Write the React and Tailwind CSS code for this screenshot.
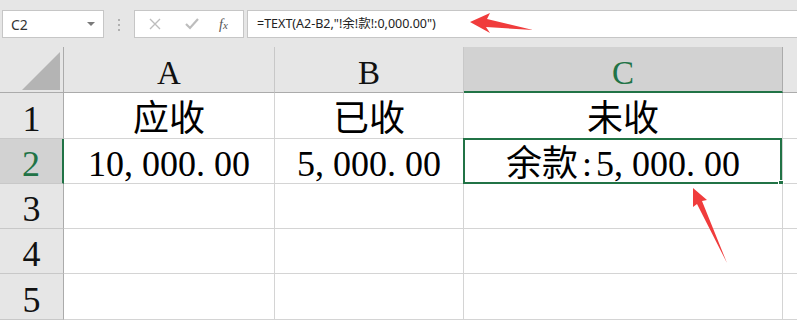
import React from "react";

const serif = "font-['Liberation_Serif','Noto_Sans_CJK_SC',serif]";

// SimSun-like half-width cells for punctuation
const Txt = ({ s }) => (
  <span>
    {s.split("").map((ch, i) =>
      ch === "," || ch === "." ? (
        <span key={i} className="inline-block w-[0.5em] text-left">
          {ch}
        </span>
      ) : ch === ":" ? (
        <span key={i} className="inline-block w-[0.5em] text-center">
          {ch}
        </span>
      ) : (
        <span key={i}>{ch}</span>
      )
    )}
  </span>
);

const Arrows = () => (
  <svg
    className="absolute left-0 top-0 pointer-events-none"
    width="797"
    height="320"
    viewBox="0 0 797 320"
  >
    {/* formula bar arrow */}
    <polygon
      points="470,22 490,13 487,19 533,30 486,27 490,33"
      fill="#f03c3c"
    />
    {/* cell arrow */}
    <polygon
      points="693,188 707,200 702,201 727,263 697,204 693,207"
      fill="#f03c3c"
    />
  </svg>
);

const Toolbar = () => (
  <div className="h-[47px] bg-[#e6e6e6] relative">
    {/* name box */}
    <div className="absolute left-[2px] top-[10px] w-[102px] h-[28px] bg-white border border-[#c6c6c6] flex items-center pl-[8px] pr-[6px]">
      <span className="text-[14px] text-[#333] font-['Noto_Sans',sans-serif] flex-1">C2</span>
      <span className="w-0 h-0 border-l-[4px] border-r-[4px] border-t-[4px] border-l-transparent border-r-transparent border-t-[#7a7a7a] mr-[2px]" />
    </div>
    {/* dots */}
    <div className="absolute left-[118px] top-[19px] flex flex-col gap-[3px]">
      <span className="w-[2px] h-[2px] bg-[#b0b0b0]" />
      <span className="w-[2px] h-[2px] bg-[#b0b0b0]" />
      <span className="w-[2px] h-[2px] bg-[#b0b0b0]" />
    </div>
    {/* fx box */}
    <div className="absolute left-[134px] top-[10px] w-[110px] h-[28px] bg-white border border-[#c6c6c6] flex items-center">
      <svg width="12" height="12" viewBox="0 0 12 12" className="ml-[14px]">
        <path d="M1 1L11 11M11 1L1 11" stroke="#bdbdbd" strokeWidth="1.4" />
      </svg>
      <svg width="14" height="12" viewBox="0 0 14 12" className="ml-[24px]">
        <path d="M1 6L5 10L13 1" stroke="#bdbdbd" strokeWidth="2.2" fill="none" />
      </svg>
      <span className="ml-[20px] italic text-[14px] text-[#555] font-['Liberation_Serif',serif]">
        f<span className="text-[11px]">x</span>
      </span>
    </div>
    {/* formula */}
    <div className="absolute left-[247px] top-[10px] -right-[2px] h-[28px] bg-white border border-[#c6c6c6] flex items-center pl-[9px]">
      <span className="text-[12.5px] text-[#222] font-['Noto_Sans','Noto_Sans_CJK_SC',sans-serif]">
        =TEXT(A2-B2,"!余!款!:0,000.00")
      </span>
    </div>
  </div>
);

const ColHead = ({ label, selected }) => (
  <div
    className={`flex items-end justify-center border-r ${
      selected
        ? "bg-[#d2d2d2] border-r-[#ababab] border-b-2 border-b-[#217346] text-[#217346] pb-[1px]"
        : "bg-[#e6e6e6] border-r-[#c8c8c8] border-b border-b-[#ababab] text-[#111] pb-[2px]"
    } ${serif} text-[33px] leading-none`}
  >
    {label}
  </div>
);

const RowHead = ({ n, selected }) => (
  <div
    className={`flex items-end justify-center border-b border-[#c8c8c8] ${
      selected
        ? "bg-[#d2d2d2] border-r-2 border-r-[#217346] text-[#217346]"
        : "bg-[#e6e6e6] border-r border-r-[#ababab] text-[#111]"
    } ${serif} text-[36px] leading-none pb-[1px]`}
  >
    {n}
  </div>
);

const Cell = ({ children, selected }) => (
  <div
    className={`relative flex items-end justify-center border-r border-b border-[#d4d4d4] bg-white ${serif} text-[36px] leading-none text-black pb-[1px]`}
  >
    {children}
    {selected && (
      <div className="absolute -left-[1px] -top-[1px] -right-[0px] -bottom-[1px] border-2 border-[#217346]">
        <span className="absolute -right-[4px] -bottom-[4px] w-[6px] h-[6px] bg-[#217346] border border-white" />
      </div>
    )}
  </div>
);

const rows = [
  ["应收", "已收", "未收"],
  ["10,000.00", "5,000.00", "余款:5,000.00"],
  ["", "", ""],
  ["", "", ""],
  ["", "", ""],
];

export default function App() {
  return (
    <div className="relative w-[797px] h-[320px] overflow-hidden bg-[#e6e6e6]">
      <Toolbar />
      <div className="grid grid-cols-[64px_211px_189px_319px_1fr] grid-rows-[46px_46px_45px_45px_45px_46px]">
        {/* corner */}
        <div className="bg-[#e6e6e6] border-r border-b border-[#ababab] relative">
          <svg width="64" height="46" className="absolute left-0 top-0">
            <polygon points="22,43 60,5 60,43" fill="#b4b4b4" />
          </svg>
        </div>
        <ColHead label="A" />
        <ColHead label="B" />
        <ColHead label="C" selected />
        <div className="bg-[#e6e6e6] border-b border-[#ababab]" />
        {rows.map((r, i) => (
          <React.Fragment key={i}>
            <RowHead n={i + 1} selected={i === 1} />
            {r.map((t, j) => (
              <Cell key={j} selected={i === 1 && j === 2}>
                <Txt s={t} />
              </Cell>
            ))}
            <div className="bg-white border-b border-[#d4d4d4]" />
          </React.Fragment>
        ))}
      </div>
      <Arrows />
    </div>
  );
}
